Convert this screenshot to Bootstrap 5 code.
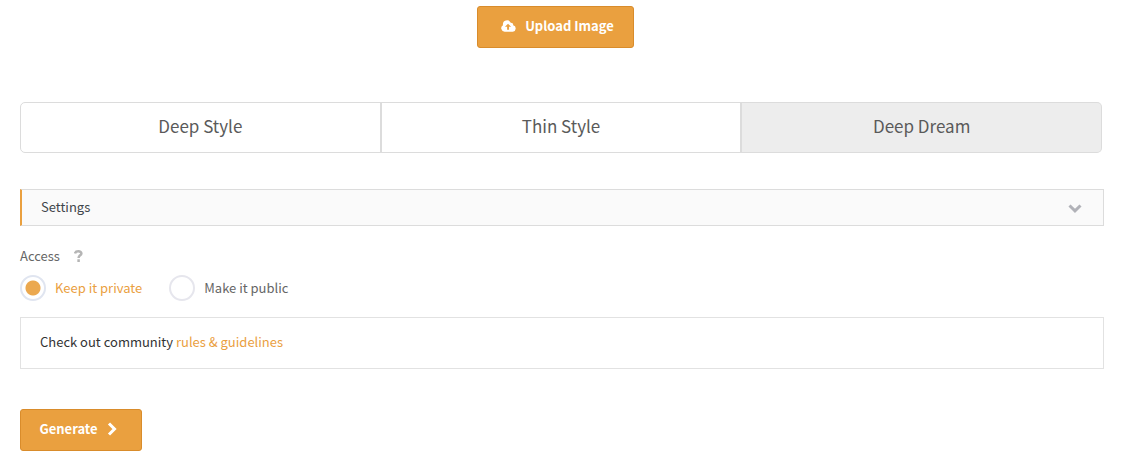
<!DOCTYPE html>
<html lang="en">
<head>
<meta charset="utf-8">
<meta name="viewport" content="width=device-width, initial-scale=1">
<title>Deep Dream Generator</title>
<link href="https://cdn.jsdelivr.net/npm/bootstrap@5.3.0/dist/css/bootstrap.min.css" rel="stylesheet">
<style>
body { font-family: "Noto Sans CJK KR", "Noto Sans", sans-serif; font-size: 13px; line-height: 20px; color: #333; background: #fff; }
.page { padding: 6px 18px 6px 20px; }
.upload-row { padding-right: 13px; }
.btn-action { --bs-btn-color: #fff; --bs-btn-bg: #eaa03f; --bs-btn-border-color: #d98c2b; --bs-btn-hover-color: #fff; --bs-btn-hover-bg: #e0932f; --bs-btn-hover-border-color: #c97e20; --bs-btn-border-radius: 3px; height: 42px; font-size: 13px; line-height: 20px; font-weight: 700; }
.btn-upload { width: 157px; padding: 0 0 2px 4px; gap: 9px; }
.btn-generate { width: 122px; padding: 0 6px 2px 0; gap: 9px; }
.style-tabs { margin: 54px 2px 36px 0; }
.style-tabs .btn { --bs-btn-color: #5a5a5a; --bs-btn-bg: #fff; --bs-btn-border-color: #dcdcdc; --bs-btn-hover-bg: #f5f5f5; --bs-btn-hover-color: #5a5a5a; --bs-btn-hover-border-color: #dcdcdc; --bs-btn-active-bg: #ededed; --bs-btn-active-color: #5a5a5a; --bs-btn-active-border-color: #dcdcdc; --bs-btn-border-radius: 5px; flex: 1 1 0; height: 51px; padding: 0 0 4px; font-size: 17px; }
.style-tabs .btn + .btn { border-left-width: 2px; }
.settings-bar { height: 37px; padding: 0 21px 2px 19px; border: 1px solid #dcdcdc; border-left: 2px solid #eaa03f; background: #fafafa; color: #3f464b; }
.access-title { margin-top: 20px; gap: 14px; color: #666; }
.help { color: #b5b5b5; }
.choices { margin: 9px 0 16px; gap: 27px; color: #666; }
.choices .form-check-input { width: 26px; height: 26px; margin: 0; border: 2px solid #e6e6ed; background: #fff; box-shadow: none; }
.choices .form-check-input:checked { border-color: #e0e5f0; background: radial-gradient(circle, #eba84f 7px, #fff 8px); }
.choices .form-check-input:checked + label { color: #eaa03f; }
.choices label { padding-left: 9px; }
.notice { height: 52px; padding: 0 19px 2px; margin-bottom: 40px; border: 1px solid #e2e2e2; }
.notice a { color: #eaa03f; }
</style>
</head>
<body>
<main class="page">
  <div class="upload-row d-flex justify-content-center">
    <button type="button" class="btn btn-action btn-upload d-inline-flex align-items-center justify-content-center">
      <svg width="15" height="12" viewBox="0 0 16 12" fill="currentColor" fill-rule="evenodd" aria-hidden="true"><path d="M4 12a3.7 3.7 0 0 1-1.9-6.9A4.4 4.4 0 0 1 10.400 2.500 2.500 2.500 0 0 1 13 5.300 3.400 3.400 0 0 1 12.600 12ZM7.500 3.500 4.200 6.800H6.500V10H8.600V6.800H10.800Z"/></svg>
      <span>Upload Image</span>
    </button>
  </div>

  <div class="style-tabs btn-group d-flex" role="group" aria-label="Style">
    <button type="button" class="btn d-flex align-items-center justify-content-center">Deep Style</button>
    <button type="button" class="btn d-flex align-items-center justify-content-center">Thin Style</button>
    <button type="button" class="btn active d-flex align-items-center justify-content-center" aria-pressed="true">Deep Dream</button>
  </div>

  <button type="button" class="settings-bar w-100 d-flex align-items-center justify-content-between">
    <span>Settings</span>
    <svg class="mt-1" width="14" height="9" viewBox="0 0 14 9" fill="none" stroke="#b1b2b8" stroke-width="3" aria-hidden="true"><path d="m1.500 1.500 5.500 5.300 5.500-5.300"/></svg>
  </button>

  <div class="access-title d-flex align-items-center">
    <span id="access">Access</span>
    <svg class="help" width="9" height="12" viewBox="0 0 9 12" fill="none" stroke="currentColor" stroke-width="2.500" role="img" aria-label="Help"><path d="M1 3.500C1.500.7 7.400.5 7.400 3.500 7.400 5.400 4.600 5.300 4.600 8M4.600 9.300V12"/></svg>
  </div>
  <div class="choices d-flex" role="radiogroup" aria-labelledby="access">
    <div class="d-flex align-items-center">
      <input class="form-check-input" type="radio" name="access" id="private" checked>
      <label for="private">Keep it private</label>
    </div>
    <div class="d-flex align-items-center">
      <input class="form-check-input" type="radio" name="access" id="public">
      <label for="public">Make it public</label>
    </div>
  </div>

  <div class="notice d-flex align-items-center">
    <span>Check out community <a href="#" class="text-decoration-none">rules &amp; guidelines</a></span>
  </div>

  <button type="submit" class="btn btn-action btn-generate d-inline-flex align-items-center justify-content-center">
    <span>Generate</span>
    <svg width="10" height="14" viewBox="0 0 10 14" fill="none" stroke="currentColor" stroke-width="3" aria-hidden="true"><path d="m2 1.500 5.500 5.500L2 12.500"/></svg>
  </button>
</main>
<script src="https://cdn.jsdelivr.net/npm/bootstrap@5.3.0/dist/js/bootstrap.bundle.min.js"></script>
</body>
</html>
